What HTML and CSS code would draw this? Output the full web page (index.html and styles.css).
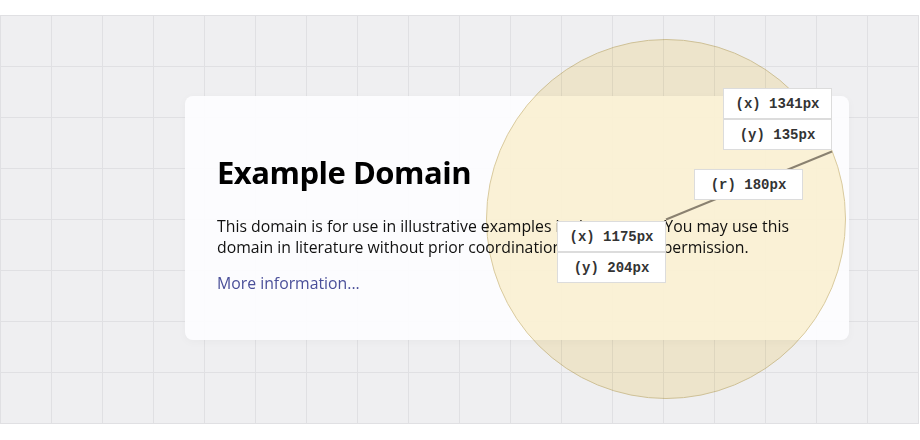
FILE: index.html
```html
<!DOCTYPE html>
<html>
<head>
<meta charset="utf-8">
<link rel="stylesheet" href="styles.css">
</head>
<body>
<div class="canvas">
  <div class="card">
    <h1 class="title">Example Domain</h1>
    <p class="text">This domain is for use in illustrative examples in documents. You may use this domain in literature without prior coordination or asking for permission.</p>
    <p class="text"><a class="link" href="#">More information...</a></p>
  </div>
  <div class="circle"></div>
  <svg class="radius-line" width="919" height="409" viewBox="0 0 919 409">
    <line x1="666" y1="204.5" x2="832" y2="136.5" stroke="#8a8170" stroke-width="2"/>
  </svg>
  <div class="tag tag-center">
    <div class="tag-box">(x) 1175px</div>
    <div class="tag-box">(y) 204px</div>
  </div>
  <div class="tag tag-edge">
    <div class="tag-box">(x) 1341px</div>
    <div class="tag-box">(y) 135px</div>
  </div>
  <div class="tag tag-radius">
    <div class="tag-box">(r) 180px</div>
  </div>
</div>
</body>
</html>
```

FILE: styles.css
```css
html, body {
  margin: 0;
  padding: 0;
  background: #ffffff;
}

body {
  padding-top: 15px;
  height: 440px;
  box-sizing: border-box;
  overflow: hidden;
}

.canvas {
  position: relative;
  width: 919px;
  height: 409px;
  box-sizing: border-box;
  padding: 81px 0 0 185px;
  background-color: #efeff1;
  background-image:
    linear-gradient(to right, #e0e0e3 1px, transparent 1px),
    linear-gradient(to bottom, #e0e0e3 1px, transparent 1px);
  background-size: 51px 51px;
  font-family: "Open Sans", "Noto Sans", sans-serif;
}

.card {
  width: 664px;
  height: 244px;
  box-sizing: border-box;
  padding: 54px 32px 32px 32px;
  background: rgba(253, 253, 255, 0.93);
  border-radius: 8px;
  box-shadow: 0 2px 10px rgba(0, 0, 0, 0.03);
}

.title {
  margin: 0 0 22px 0;
  font-size: 31px;
  line-height: 44px;
  letter-spacing: -0.5px;
  font-weight: 700;
  color: #000;
}

.text {
  margin: 0 0 15px 0;
  font-size: 15.8px;
  line-height: 21px;
  color: #111;
}

.link {
  color: #4a4f99;
  text-decoration: none;
}

.circle {
  position: absolute;
  left: 486px;
  top: 24px;
  width: 360px;
  height: 360px;
  box-sizing: border-box;
  border-radius: 50%;
  border: 1px solid #dccd9f;
  background: #fdf4d7;
  mix-blend-mode: multiply;
}

.radius-line {
  position: absolute;
  left: 0;
  top: 0;
  overflow: visible;
}

.tag {
  position: absolute;
  width: 109px;
  display: flex;
  flex-direction: column;
}

.tag-box {
  height: 31px;
  box-sizing: border-box;
  border: 1px solid #dcdcdc;
  background: #fff;
  display: flex;
  align-items: center;
  justify-content: center;
  font-family: "Liberation Mono", "DejaVu Sans Mono", monospace;
  font-weight: 700;
  font-size: 14px;
  color: #333;
}

.tag-center {
  left: 557px;
  top: 206px;
}

.tag-edge {
  left: 723px;
  top: 73px;
}

.tag-radius {
  left: 694px;
  top: 154px;
}
```
